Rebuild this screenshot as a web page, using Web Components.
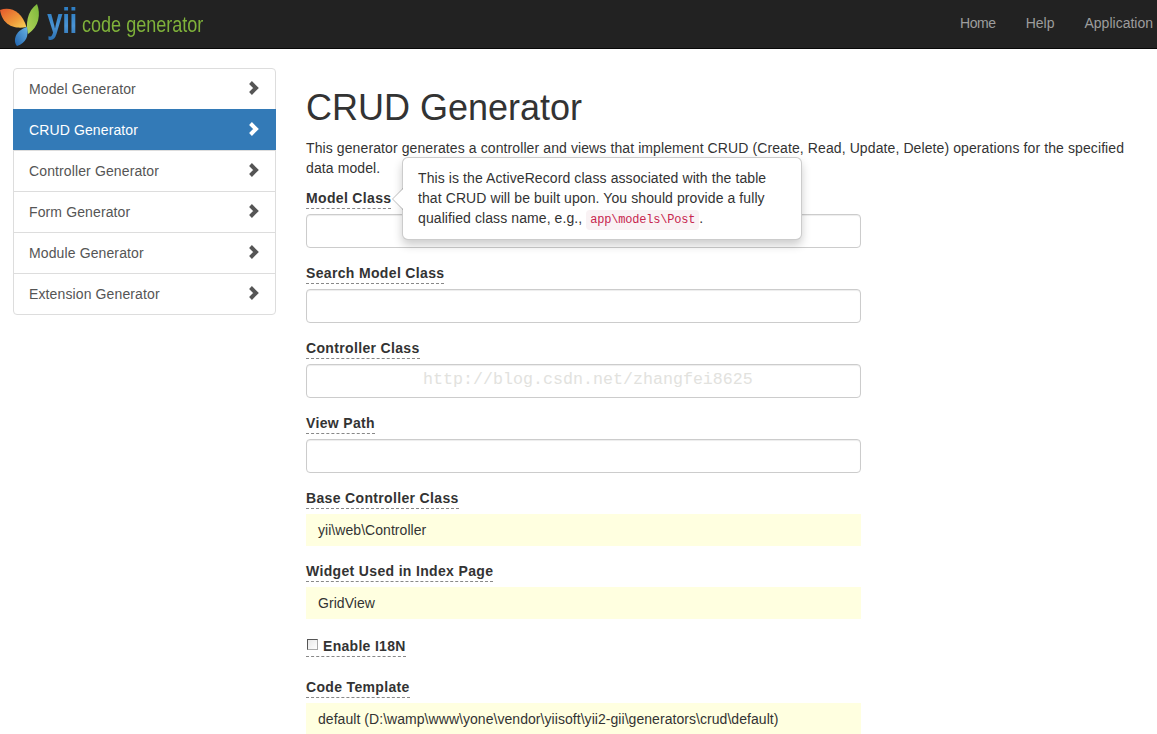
<!DOCTYPE html>
<html>
<head>
<meta charset="utf-8">
<title>CRUD Generator</title>
<style>
html, body { height: 100%; overflow: hidden; }
body {
	margin: 0;
	background: #fff;
	color: #333;
	font: 14px/20px "Liberation Sans", Arial, sans-serif;
	letter-spacing: .12px;
}
</style>
</head>
<body>
<gii-navbar>
	<gii-nav-link>Home</gii-nav-link>
	<gii-nav-link>Help</gii-nav-link>
	<gii-nav-link>Application</gii-nav-link>
</gii-navbar>
<gii-page>
	<gii-sidebar slot="side">
		<gii-side-item>Model Generator</gii-side-item>
		<gii-side-item active>CRUD Generator</gii-side-item>
		<gii-side-item>Controller Generator</gii-side-item>
		<gii-side-item>Form Generator</gii-side-item>
		<gii-side-item>Module Generator</gii-side-item>
		<gii-side-item>Extension Generator</gii-side-item>
	</gii-sidebar>
	<gii-heading title="CRUD Generator">This generator generates a controller and views that implement CRUD (Create, Read, Update, Delete) operations for the specified data model.</gii-heading>
	<gii-field label="Model Class">
		<gii-popover slot="over">This is the ActiveRecord class associated with the table that CRUD will be built upon. You should provide a fully qualified class name, e.g., <gii-code>app\models\Post</gii-code>.</gii-popover>
	</gii-field>
	<gii-field label="Search Model Class"></gii-field>
	<gii-field label="Controller Class">
		<gii-watermark slot="over">http://blog.csdn.net/zhangfei8625</gii-watermark>
	</gii-field>
	<gii-field label="View Path"></gii-field>
	<gii-field label="Base Controller Class" sticky="yii\web\Controller"></gii-field>
	<gii-field label="Widget Used in Index Page" sticky="GridView"></gii-field>
	<gii-check label="Enable I18N"></gii-check>
	<gii-field label="Code Template" sticky="default (D:\wamp\www\yone\vendor\yiisoft\yii2-gii\generators\crud\default)"></gii-field>
</gii-page>

<script>
class GiiNavbar extends HTMLElement {
	constructor() {
		super();
		this.attachShadow({ mode: 'open' });
		this.shadowRoot.innerHTML = `
			<style>
				:host {
					display: flex;
					align-items: center;
					justify-content: space-between;
					height: 48px;
					background: #222;
					border-bottom: 1px solid #080808;
					letter-spacing: 0;
				}
				.brand { display: flex; align-items: center; height: 48px; overflow: hidden; }
				svg { display: block; flex: none; }
				.yii {
					width: 39px;
					margin: -6px -8px 0 5px;
					font: bold 35px/48px "Liberation Sans", sans-serif;
					letter-spacing: -.5px;
					color: transparent;
					background: linear-gradient(#2f7fc4 30%, #4a94d4 60%, #2b6fb0 90%);
					-webkit-background-clip: text;
					background-clip: text;
					transform: scaleX(.8);
					transform-origin: left center;
				}
				.name {
					color: #7fb23a;
					font: 22px/48px "Liberation Sans", sans-serif;
					margin: 1px 0 0 4px;
					transform: scaleX(.82);
					transform-origin: left center;
					white-space: nowrap;
				}
				nav { display: flex; padding-right: 4px; align-self: flex-start; }
			</style>
			<div class="brand">
				<svg width="42" height="45" viewBox="0 0 42 45">
					<defs>
						<linearGradient id="orange" x1="0" y1="0" x2="1" y2="1">
							<stop offset="0" stop-color="#e2562b"/>
							<stop offset=".6" stop-color="#ef9a3a"/>
							<stop offset="1" stop-color="#f6d35a"/>
						</linearGradient>
						<linearGradient id="green" x1="1" y1="0" x2="0" y2="1">
							<stop offset="0" stop-color="#7ab83a"/>
							<stop offset="1" stop-color="#b4d35a"/>
						</linearGradient>
						<linearGradient id="blue" x1="1" y1="0" x2="0" y2="1">
							<stop offset="0" stop-color="#69b3e4"/>
							<stop offset="1" stop-color="#1f62ad"/>
						</linearGradient>
					</defs>
					<path fill="url(#orange)" d="M0 8C10 4 22 9 26.500 25C16 27 3 25 0 8Z"/>
					<path fill="url(#green)" d="M37 2C41 12 39 25 28 32C25.500 22 27 9 37 2Z"/>
					<path fill="url(#blue)" d="M27 25C29 34 26 41 17 44C13 40 14 29 27 25Z"/>
				</svg>
				<span class="yii">yii</span>
				<span class="name">code generator</span>
			</div>
			<nav><slot></slot></nav>
		`;
	}
}

class GiiNavLink extends HTMLElement {
	constructor() {
		super();
		this.attachShadow({ mode: 'open' });
		this.shadowRoot.innerHTML = `
			<style>
				:host { display: block; padding: 0 0 0 30px; color: #9d9d9d; line-height: 46px; }
				:host(:first-child) { letter-spacing: -.4px; }
			</style>
			<slot></slot>
		`;
	}
}

class GiiPage extends HTMLElement {
	constructor() {
		super();
		this.attachShadow({ mode: 'open' });
		this.shadowRoot.innerHTML = `
			<style>
				:host { display: flex; padding: 19px 0 0 13px; align-items: flex-start; }
				.side { width: 263px; flex: none; }
				main { width: 826px; margin-left: 30px; flex: none; }
			</style>
			<div class="side"><slot name="side"></slot></div>
			<main><slot></slot></main>
		`;
	}
}

class GiiSidebar extends HTMLElement {
	constructor() {
		super();
		this.attachShadow({ mode: 'open' });
		this.shadowRoot.innerHTML = `
			<style>
				:host {
					display: block;
					border: 1px solid #ddd;
					border-radius: 4px;
				}
			</style>
			<slot></slot>
		`;
	}
}

class GiiSideItem extends HTMLElement {
	constructor() {
		super();
		this.attachShadow({ mode: 'open' });
		this.shadowRoot.innerHTML = `
			<style>
				:host {
					display: flex;
					align-items: center;
					justify-content: space-between;
					height: 40px;
					padding: 0 15px 0 15px;
					color: #555;
					border-top: 1px solid #ddd;
				}
				:host(:first-child) { border-top: 0; }
				:host([active]) { background: #337ab7; color: #fff; margin: 0 -1px; padding: 0 16px; border-top-color: #337ab7; }
				svg { display: block; margin-top: -3px; }
				path { fill: none; stroke: currentColor; stroke-width: 4; }
			</style>
			<span><slot></slot></span>
			<svg width="12" height="14" viewBox="0 0 12 14"><path d="M2.500 1.500L8 7L2.500 12.500"/></svg>
		`;
	}
}

class GiiHeading extends HTMLElement {
	constructor() {
		super();
		this.attachShadow({ mode: 'open' });
		this.shadowRoot.innerHTML = `
			<style>
				:host { display: block; }
				h1 { margin: 20px 0 10px; font-size: 36px; font-weight: 500; line-height: 40px; letter-spacing: 0; }
				p { margin: 0 0 10px; letter-spacing: .1px; }
			</style>
			<h1></h1>
			<p><slot></slot></p>
		`;
		this.shadowRoot.querySelector('h1').textContent = this.getAttribute('title');
	}
}

class GiiField extends HTMLElement {
	constructor() {
		super();
		this.attachShadow({ mode: 'open' });
		this.shadowRoot.innerHTML = `
			<style>
				:host { display: block; position: relative; width: 555px; margin-bottom: 15px; }
				label {
					display: inline-block;
					height: 20px;
					margin-bottom: 5px;
					font-weight: bold;
					border-bottom: 1px dashed #888;
					letter-spacing: .34px;
				}
				.input {
					box-sizing: border-box;
					height: 34px;
					border: 1px solid #ccc;
					border-radius: 4px;
					box-shadow: inset 0 1px 1px rgba(0,0,0,.075);
					background: #fff;
				}
				.sticky {
					box-sizing: border-box;
					height: 32px;
					line-height: 32px;
					padding: 0 12px;
					background: #ffffe0;
					white-space: nowrap;
					letter-spacing: .05px;
				}
			</style>
			<label></label>
			<div class="box"></div>
			<slot name="over"></slot>
		`;
		this.shadowRoot.querySelector('label').textContent = this.getAttribute('label');
		const box = this.shadowRoot.querySelector('.box');
		if (this.hasAttribute('sticky')) {
			box.className = 'sticky';
			box.textContent = this.getAttribute('sticky');
		} else {
			box.className = 'input';
		}
	}
}

class GiiCheck extends HTMLElement {
	constructor() {
		super();
		this.attachShadow({ mode: 'open' });
		this.shadowRoot.innerHTML = `
			<style>
				:host { display: block; padding-top: 1px; margin: 0 0 20px; }
				.row {
					display: inline-flex;
					align-items: flex-start;
					height: 20px;
					font-weight: bold;
					border-bottom: 1px dashed #888;
					letter-spacing: .3px;
				}
				i {
					box-sizing: border-box;
					width: 11px;
					height: 11px;
					margin: 3px 5px 0 1px;
					border: 1px solid #aaa;
					border-top-color: #555;
					border-left-color: #555;
					background: linear-gradient(135deg, #e8e8e8, #fff);
				}
			</style>
			<div class="row"><i></i><span></span></div>
		`;
		this.shadowRoot.querySelector('span').textContent = this.getAttribute('label');
	}
}

class GiiPopover extends HTMLElement {
	constructor() {
		super();
		this.attachShadow({ mode: 'open' });
		this.shadowRoot.innerHTML = `
			<style>
				:host {
					position: absolute;
					left: 96px;
					top: -31px;
					z-index: 5;
					box-sizing: border-box;
					width: 400px;
					padding: 10px 15px 9px;
					background: #fff;
					border: 1px solid rgba(0,0,0,.2);
					border-radius: 6px;
					box-shadow: 0 5px 10px rgba(0,0,0,.2);
					letter-spacing: .09px;
				}
				.arrow {
					position: absolute;
					left: -11px;
					top: 30px;
					width: 0;
					height: 0;
					border: 11px solid transparent;
					border-left-width: 0;
					border-right-color: rgba(0,0,0,.25);
				}
				.arrow::after {
					content: '';
					position: absolute;
					left: 1px;
					top: -10px;
					border: 10px solid transparent;
					border-left-width: 0;
					border-right-color: #fff;
				}
			</style>
			<div class="arrow"></div>
			<slot></slot>
		`;
	}
}

class GiiCode extends HTMLElement {
	constructor() {
		super();
		this.attachShadow({ mode: 'open' });
		this.shadowRoot.innerHTML = `
			<style>
				:host {
					display: inline-block;
					padding: 0 4px;
					font: 12px/20px "Liberation Mono", monospace;
					letter-spacing: -.2px;
					color: #c7254e;
					background: #f9f2f4;
					border-radius: 4px;
				}
			</style>
			<slot></slot>
		`;
	}
}

class GiiWatermark extends HTMLElement {
	constructor() {
		super();
		this.attachShadow({ mode: 'open' });
		this.shadowRoot.innerHTML = `
			<style>
				:host {
					position: absolute;
					left: 117px;
					top: 28px;
					font: 16.670px/28px "Liberation Mono", monospace;
					letter-spacing: 0;
					color: #e2e2de;
					white-space: nowrap;
				}
			</style>
			<slot></slot>
		`;
	}
}

customElements.define('gii-navbar', GiiNavbar);
customElements.define('gii-nav-link', GiiNavLink);
customElements.define('gii-page', GiiPage);
customElements.define('gii-sidebar', GiiSidebar);
customElements.define('gii-side-item', GiiSideItem);
customElements.define('gii-heading', GiiHeading);
customElements.define('gii-field', GiiField);
customElements.define('gii-check', GiiCheck);
customElements.define('gii-popover', GiiPopover);
customElements.define('gii-code', GiiCode);
customElements.define('gii-watermark', GiiWatermark);
</script>
</body>
</html>
